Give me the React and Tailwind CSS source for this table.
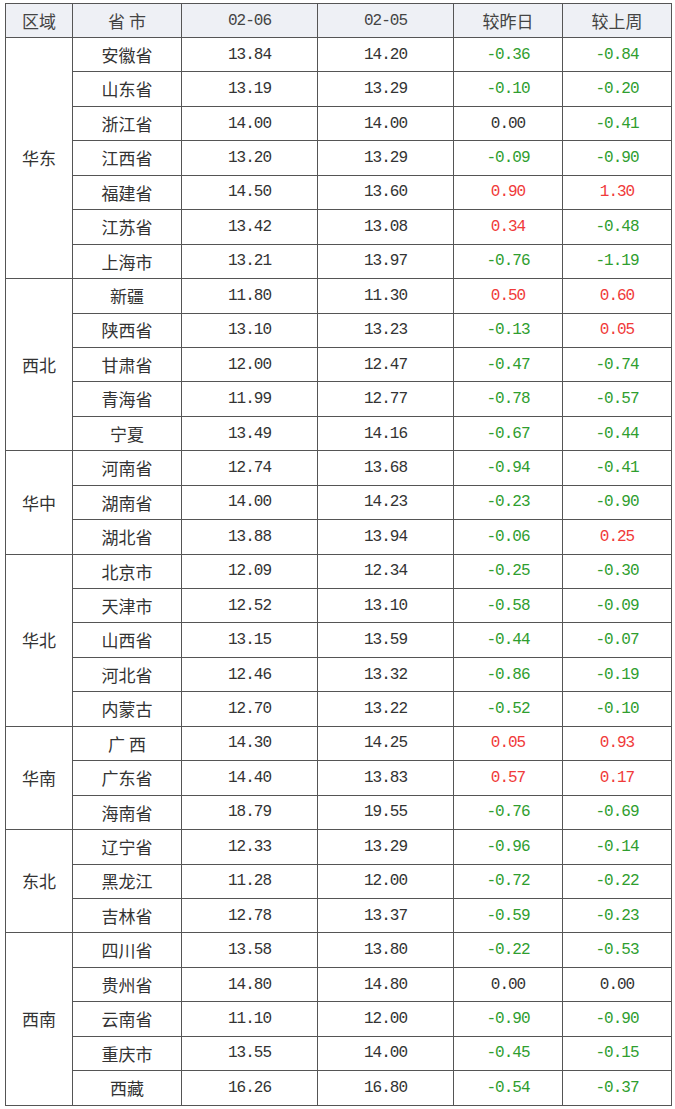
const regions = [
  {
    name: "华东",
    rows: [
      ["安徽省", "13.84", "14.20", "-0.36", "-0.84"],
      ["山东省", "13.19", "13.29", "-0.10", "-0.20"],
      ["浙江省", "14.00", "14.00", "0.00", "-0.41"],
      ["江西省", "13.20", "13.29", "-0.09", "-0.90"],
      ["福建省", "14.50", "13.60", "0.90", "1.30"],
      ["江苏省", "13.42", "13.08", "0.34", "-0.48"],
      ["上海市", "13.21", "13.97", "-0.76", "-1.19"],
    ],
  },
  {
    name: "西北",
    rows: [
      ["新疆", "11.80", "11.30", "0.50", "0.60"],
      ["陕西省", "13.10", "13.23", "-0.13", "0.05"],
      ["甘肃省", "12.00", "12.47", "-0.47", "-0.74"],
      ["青海省", "11.99", "12.77", "-0.78", "-0.57"],
      ["宁夏", "13.49", "14.16", "-0.67", "-0.44"],
    ],
  },
  {
    name: "华中",
    rows: [
      ["河南省", "12.74", "13.68", "-0.94", "-0.41"],
      ["湖南省", "14.00", "14.23", "-0.23", "-0.90"],
      ["湖北省", "13.88", "13.94", "-0.06", "0.25"],
    ],
  },
  {
    name: "华北",
    rows: [
      ["北京市", "12.09", "12.34", "-0.25", "-0.30"],
      ["天津市", "12.52", "13.10", "-0.58", "-0.09"],
      ["山西省", "13.15", "13.59", "-0.44", "-0.07"],
      ["河北省", "12.46", "13.32", "-0.86", "-0.19"],
      ["内蒙古", "12.70", "13.22", "-0.52", "-0.10"],
    ],
  },
  {
    name: "华南",
    rows: [
      ["广 西", "14.30", "14.25", "0.05", "0.93"],
      ["广东省", "14.40", "13.83", "0.57", "0.17"],
      ["海南省", "18.79", "19.55", "-0.76", "-0.69"],
    ],
  },
  {
    name: "东北",
    rows: [
      ["辽宁省", "12.33", "13.29", "-0.96", "-0.14"],
      ["黑龙江", "11.28", "12.00", "-0.72", "-0.22"],
      ["吉林省", "12.78", "13.37", "-0.59", "-0.23"],
    ],
  },
  {
    name: "西南",
    rows: [
      ["四川省", "13.58", "13.80", "-0.22", "-0.53"],
      ["贵州省", "14.80", "14.80", "0.00", "0.00"],
      ["云南省", "11.10", "12.00", "-0.90", "-0.90"],
      ["重庆市", "13.55", "14.00", "-0.45", "-0.15"],
      ["西藏", "16.26", "16.80", "-0.54", "-0.37"],
    ],
  },
];

const cjk = "font-['Noto_Sans_CJK_SC',sans-serif] text-[17px]";
const num = "font-['Liberation_Mono','Noto_Sans_CJK_SC',monospace] text-[16px] tracking-[-1px]";
const cell = "border border-[#555] text-center align-middle p-0";

function changeColor(v) {
  if (v.startsWith("-")) return "text-[#2f9e2f]";
  if (v === "0.00") return "text-[#333]";
  return "text-[#f03a3a]";
}

export default function App() {
  return (
    <div className="bg-white w-[675px] h-[1109px] pt-[3px] pl-[5px]">
      <table className="border-collapse w-[666px] table-fixed text-[#333]">
        <colgroup>
          <col className="w-[67px]" />
          <col className="w-[109px]" />
          <col className="w-[136px]" />
          <col className="w-[136px]" />
          <col className="w-[109px]" />
          <col className="w-[109px]" />
        </colgroup>
        <thead>
          <tr className="h-[34px] bg-[#eef0f5] text-[#444]">
            <th className={`${cell} ${cjk} font-normal`}>区域</th>
            <th className={`${cell} ${cjk} font-normal`}>省 市</th>
            <th className={`${cell} ${num} font-normal`}>02-06</th>
            <th className={`${cell} ${num} font-normal`}>02-05</th>
            <th className={`${cell} ${cjk} font-normal`}>较昨日</th>
            <th className={`${cell} ${cjk} font-normal`}>较上周</th>
          </tr>
        </thead>
        <tbody>
          {regions.map((region) =>
            region.rows.map((row, i) => (
              <tr key={region.name + row[0]} className="h-[34.45px]">
                {i === 0 && (
                  <td rowSpan={region.rows.length} className={`${cell} ${cjk}`}>
                    {region.name}
                  </td>
                )}
                <td className={`${cell} ${cjk}`}>{row[0]}</td>
                <td className={`${cell} ${num}`}>{row[1]}</td>
                <td className={`${cell} ${num}`}>{row[2]}</td>
                <td className={`${cell} ${num} ${changeColor(row[3])}`}>{row[3]}</td>
                <td className={`${cell} ${num} ${changeColor(row[4])}`}>{row[4]}</td>
              </tr>
            ))
          )}
        </tbody>
      </table>
    </div>
  );
}
